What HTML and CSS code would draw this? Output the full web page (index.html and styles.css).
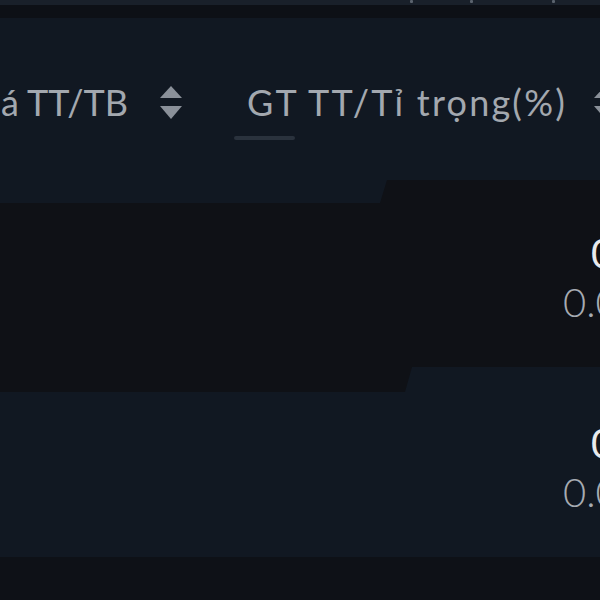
FILE: index.html
```html
<!DOCTYPE html>
<html lang="vi">
<head>
<meta charset="utf-8">
<link rel="stylesheet" href="styles.css">
</head>
<body>
<div class="screen">
  <div class="status">
    <span class="tick t1"></span>
    <span class="tick t2"></span>
    <span class="tick t3"></span>
  </div>
  <div class="gap"></div>
  <div class="thead">
    <div class="th th-price">
      <span class="label">á TT/TB</span>
      <svg class="sort" width="22" height="33" viewBox="0 0 22 33">
        <path d="M11 0 L22 12 L0 12 Z" fill="#8a9099"/>
        <path d="M0 20 L22 20 L11 33 Z" fill="#8a9099"/>
      </svg>
    </div>
    <div class="th th-value">
      <span class="label label-wide">GT TT/Tỉ trọng(%)</span>
      <svg class="sort" width="22" height="33" viewBox="0 0 22 33">
        <path d="M11 0 L22 12 L0 12 Z" fill="#8a9099"/>
        <path d="M0 20 L22 20 L11 33 Z" fill="#8a9099"/>
      </svg>
    </div>
  </div>
  <div class="indicator"></div>
  <div class="row row-dark">
    <div class="cell">
      <span class="v-main">0</span>
      <span class="v-sub">0.00%</span>
    </div>
  </div>
  <div class="row row-navy">
    <div class="cell">
      <span class="v-main">0</span>
      <span class="v-sub">0.00%</span>
    </div>
  </div>
  <div class="footer"></div>
</div>
</body>
</html>
```
FILE: styles.css
```css
html, body {
  margin: 0;
  padding: 0;
}
body {
  background: #111822;
  font-family: "Lato", "Open Sans", sans-serif;
  width: 600px;
  height: 600px;
  overflow: hidden;
}
.screen {
  display: flex;
  flex-direction: column;
  width: 600px;
  height: 600px;
  overflow: hidden;
}
.status {
  height: 5px;
  background: #19202a;
  display: flex;
  position: relative;
}
.tick {
  position: absolute;
  top: 0;
  width: 3px;
  height: 3px;
  background: #5b636e;
  border-radius: 1px;
}
.t1 { left: 410px; }
.t2 { left: 470px; }
.t3 { left: 552px; }
.gap {
  height: 13px;
  background: #0d1016;
}
.thead {
  height: 104px;
  display: flex;
  align-items: flex-end;
  color: #a3a8af;
  font-size: 36px;
  white-space: nowrap;
}
.th {
  display: flex;
  align-items: center;
  flex-shrink: 0;
}
.label {
  line-height: 40px;
}
.label-wide {
  letter-spacing: 2.2px;
}
.th-price {
  width: 247px;
  padding-left: 1px;
  box-sizing: border-box;
}
.th-price .sort {
  margin-left: 32px;
}
.th-value .sort {
  margin-left: 27px;
}
.indicator {
  margin: 14px 0 0 234px;
  width: 61px;
  height: 4px;
  border-radius: 2px;
  background: #2a323d;
}
.row {
  position: relative;
  white-space: nowrap;
}
.row-dark {
  margin-top: 40px;
  height: 212px;
  background: #0f1116;
  clip-path: polygon(0 23px, 380px 23px, 387px 0, 600px 0, 600px 187px, 412px 187px, 405px 212px, 0 212px);
}
.row-navy {
  height: 165px;
}
.cell {
  display: flex;
  flex-direction: column;
  align-items: flex-start;
  padding-left: 563px;
  font-size: 40px;
  line-height: 49px;
}
.row-dark .cell {
  padding-top: 49px;
}
.row-navy .cell {
  padding-top: 27px;
}
.v-main {
  color: #e8eaed;
  padding-left: 28px;
}
.v-sub {
  color: #a6abb2;
  font-weight: 300;
}
.footer {
  flex: 1;
  background: #0e1117;
}
```
